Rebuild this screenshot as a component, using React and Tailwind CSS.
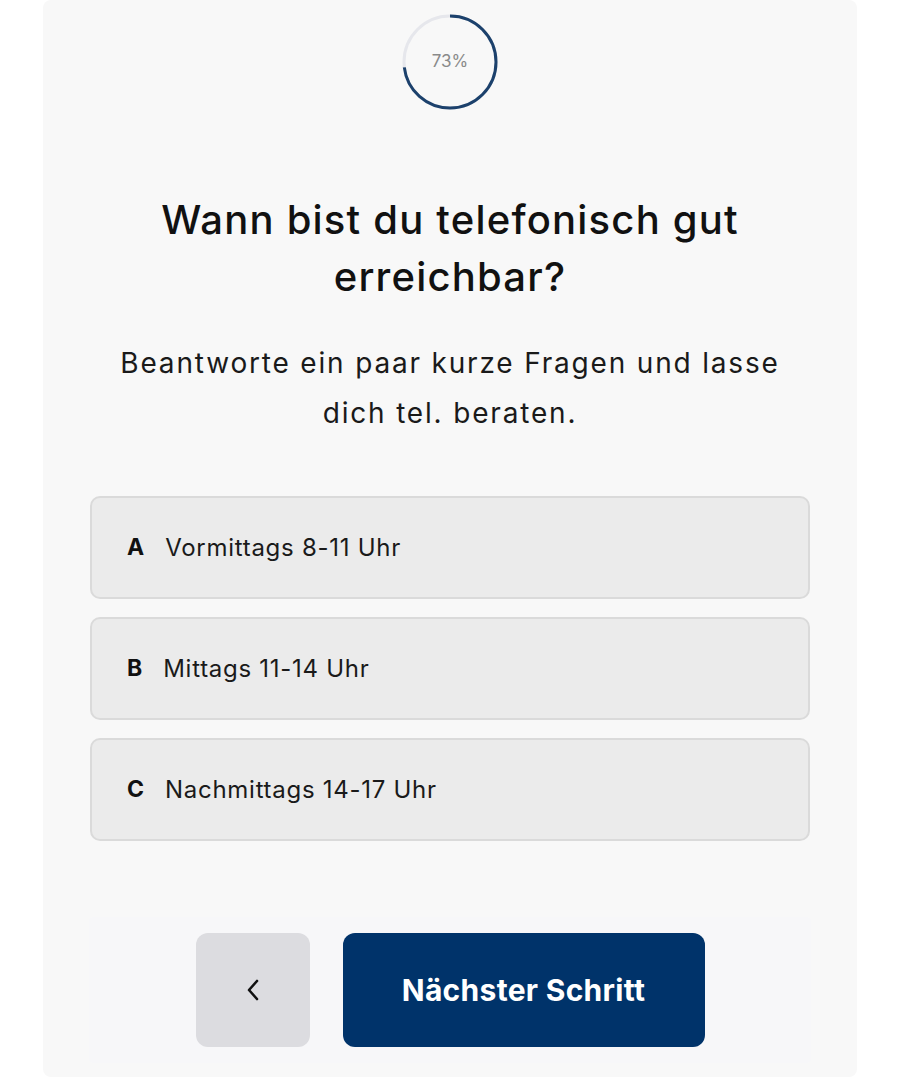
import React, { useState } from 'react';

const options = [
    { key: 'A', label: 'Vormittags 8-11 Uhr' },
    { key: 'B', label: 'Mittags 11-14 Uhr' },
    { key: 'C', label: 'Nachmittags 14-17 Uhr' },
];

const ProgressRing = ({ value }) => {
    const r = 46;
    const c = 2 * Math.PI * r;
    return (
        <div className="relative w-[98px] h-[98px]">
            <svg width="98" height="98" viewBox="0 0 98 98" className="-rotate-90">
                <circle cx="49" cy="49" r={r} fill="none" stroke="#e6e7ec" strokeWidth="3" />
                <circle
                    cx="49" cy="49" r={r} fill="none" stroke="#1c416c" strokeWidth="3"
                    strokeDasharray={c} strokeDashoffset={c * (1 - value / 100)}
                />
            </svg>
            <span className="absolute inset-0 flex items-center justify-center text-[17px] text-[#8a8a8a]">{value}%</span>
        </div>
    );
};

export default function App() {
    const [selected, setSelected] = useState(null);

    return (
        <div className="min-h-screen bg-white" style={{ fontFamily: 'Inter, "Noto Sans", sans-serif' }}>
            <div className="mx-[43px] min-h-[1077px] bg-[#f8f8f8] rounded-lg flex flex-col items-center pt-[13px]">
                <ProgressRing value={73} />

                <h1 className="mt-[80px] w-[640px] text-center text-[40px] leading-[57px] font-medium tracking-[0.03em] text-[#111]">
                    Wann bist du telefonisch gut erreichbar?
                </h1>

                <p className="mt-[33px] w-[720px] text-center text-[28px] leading-[50px] tracking-[0.065em] text-[#1a1a1a]">
                    Beantworte ein paar kurze Fragen und lasse dich tel. beraten.
                </p>

                <div className="mt-[58px] w-[720px] flex flex-col gap-[18px]">
                    {options.map((o) => (
                        <button
                            key={o.key}
                            onClick={() => setSelected(o.key)}
                            className={`h-[103px] w-full flex items-center pl-[35px] rounded-[10px] border-2 text-left ${selected === o.key ? 'border-[#1c416c] bg-[#e4e8ef]' : 'border-[#dadada] bg-[#ebebeb]'}`}
                        >
                            <span className="text-[23px] font-bold text-[#111] mr-[21px]">{o.key}</span>
                            <span className="text-[24px] tracking-[0.03em] text-[#1a1a1a]">{o.label}</span>
                        </button>
                    ))}
                </div>

                <div className="mt-[76px] w-[722px] h-[146px] bg-[#f7f7f9] rounded flex items-center justify-center gap-[33px]">
                    <button className="w-[114px] h-[114px] rounded-[12px] bg-[#dcdce0] flex items-center justify-center">
                        <svg width="16" height="28" viewBox="0 0 16 28" fill="none" stroke="#111" strokeWidth="2.6" strokeLinecap="round" strokeLinejoin="round">
                            <path d="M12 5 L4 14 L12 23" />
                        </svg>
                    </button>
                    <button className="w-[362px] h-[114px] rounded-[12px] bg-[#00336a] text-white text-[30px] font-bold tracking-[0.01em]">
                        Nächster Schritt
                    </button>
                </div>
            </div>
        </div>
    );
}
